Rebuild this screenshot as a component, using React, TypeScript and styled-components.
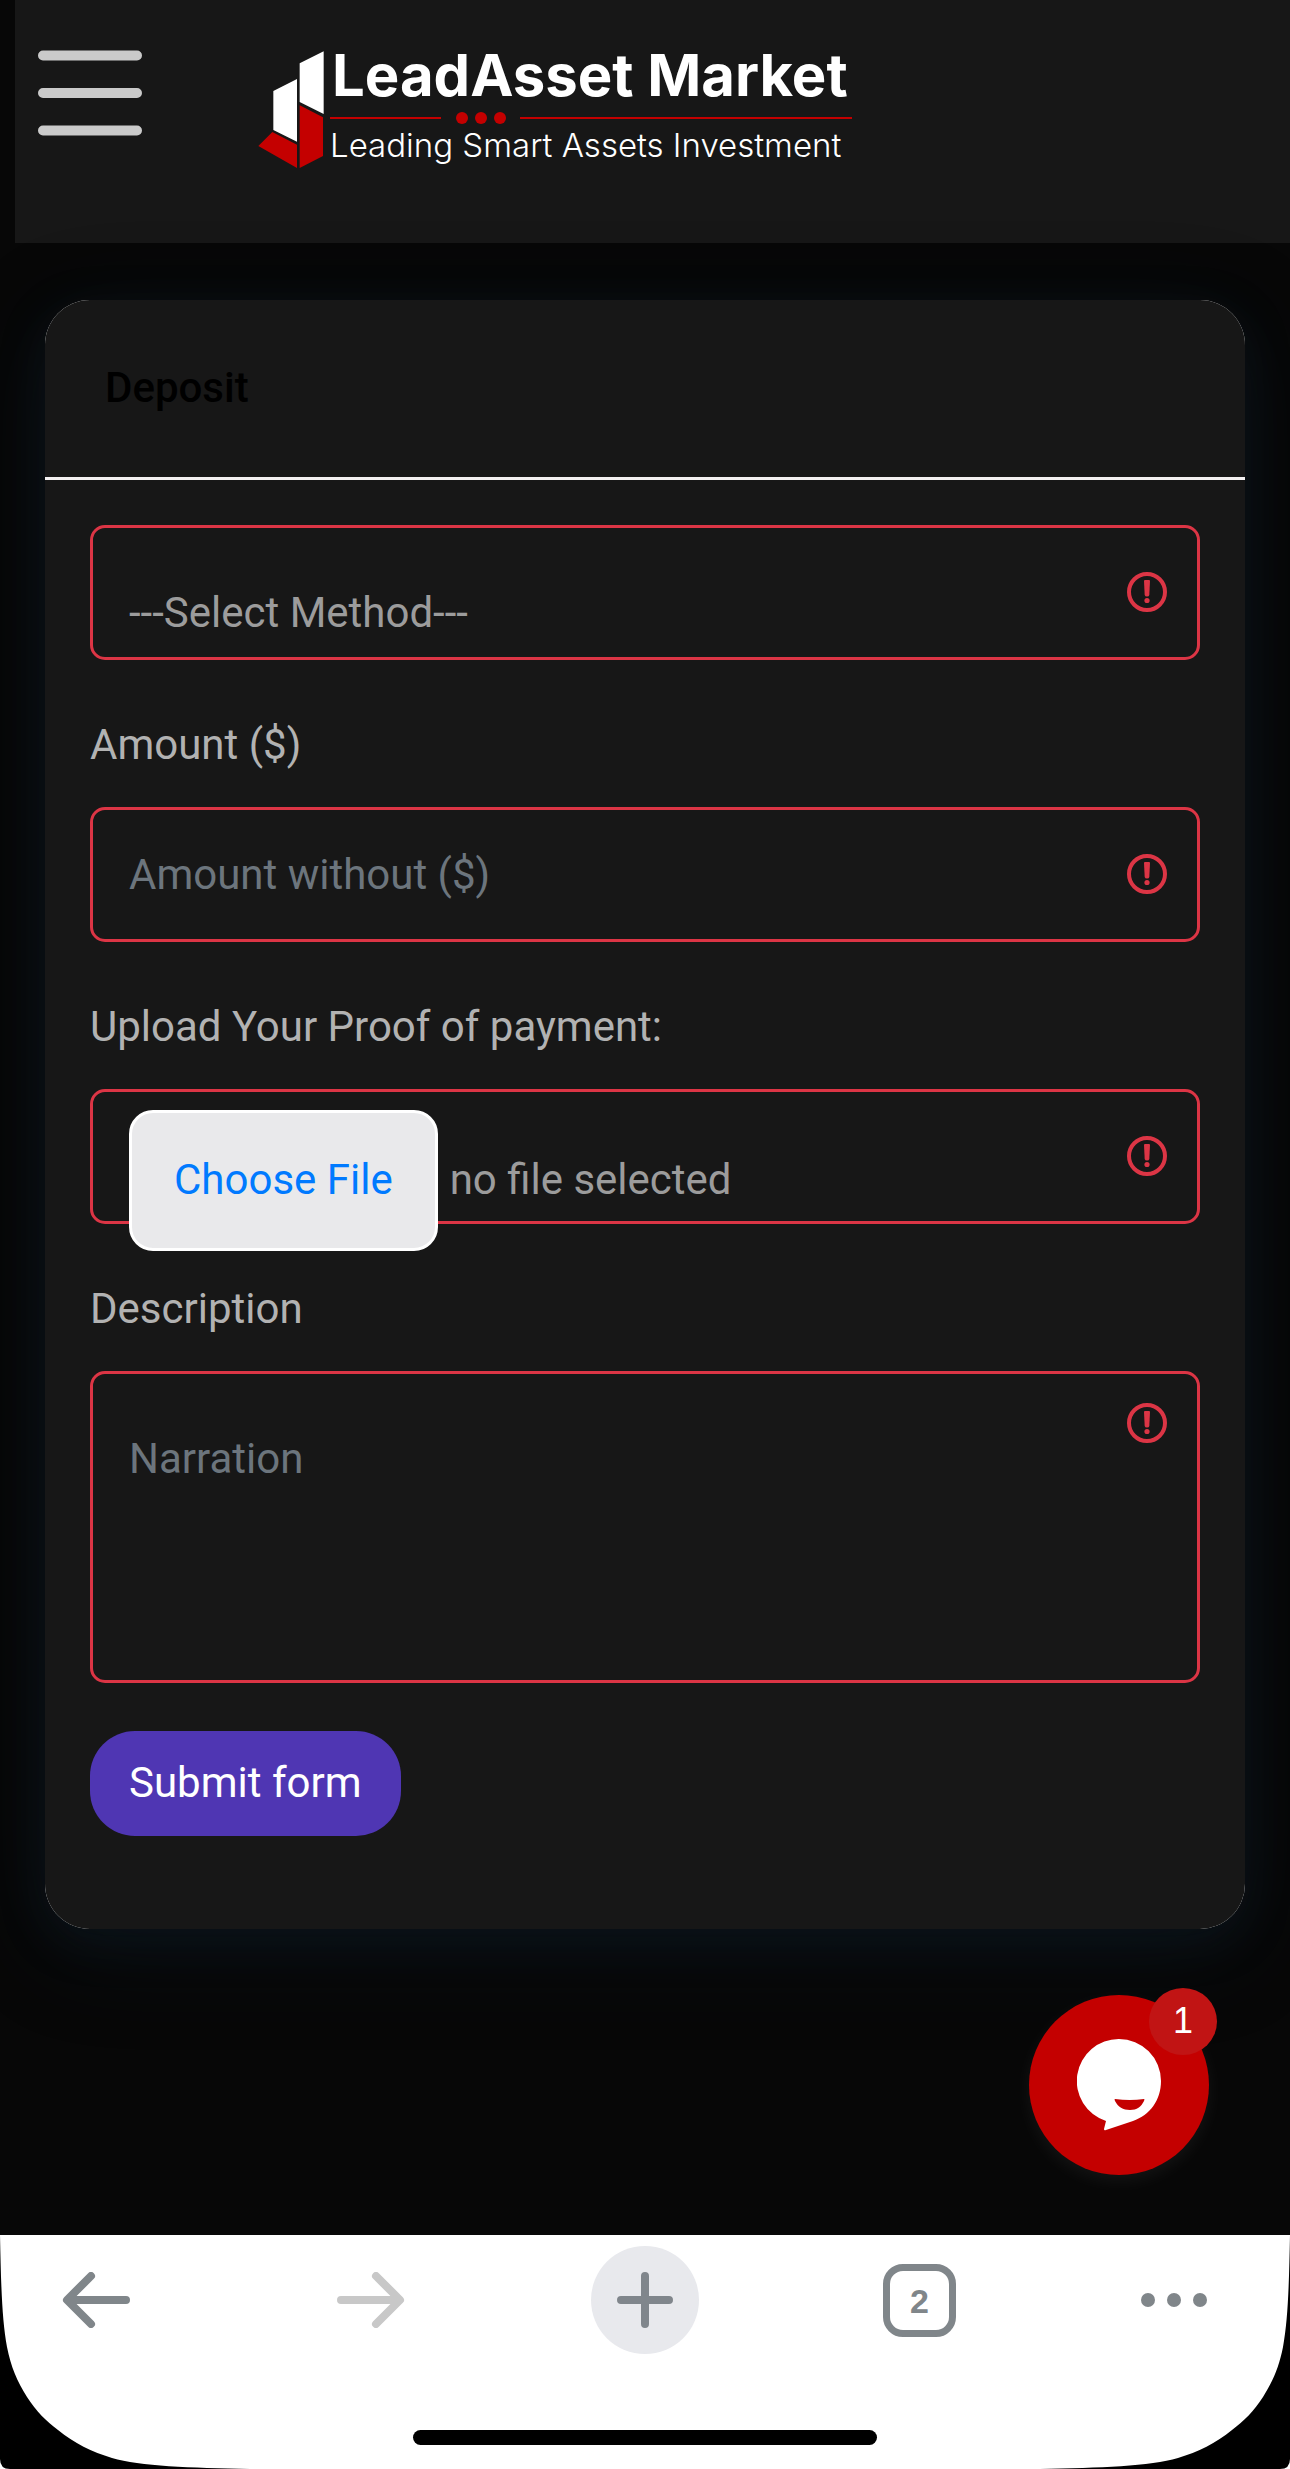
import React from "react";
import styled, { createGlobalStyle, css } from "styled-components";

const GlobalStyle = createGlobalStyle`
  *, *::before, *::after { box-sizing: border-box; }
  html, body { margin: 0; background: #070707; }
  body { font-family: Roboto, "Liberation Sans", sans-serif; font-size: 42px; line-height: 63px; }
  button, input, select, textarea { font: inherit; margin: 0; }
`;

const Page = styled.div`
  display: flex;
  flex-direction: column;
  min-height: 100vh;
  background: #070707;
`;

const Header = styled.header`
  display: flex;
  align-items: flex-start;
  height: 243px;
  margin-left: 15px;
  padding: 50px 24px 0 23px;
  background: #171717;
`;

const MenuButton = styled.button`
  display: flex;
  padding: 0;
  border: 0;
  background: none;
  cursor: pointer;
`;

const Brand = styled.a`
  display: flex;
  margin-left: 116px;
  gap: 6px;
  color: #fff;
  text-decoration: none;
`;

const BrandText = styled.span`
  display: flex;
  flex-direction: column;
  width: 522px;
`;

const BrandName = styled.span`
  padding-left: 2px;
  font-family: Inter, sans-serif;
  font-size: 58px;
  font-weight: 700;
  line-height: 50px;
  white-space: nowrap;
`;

const BrandRule = styled.span`
  display: flex;
  align-items: center;
  height: 12px;
  margin-top: 12px;
`;

const Line = styled.span<{ $grow?: boolean }>`
  height: 2px;
  background: #c40000;
  ${(p) => (p.$grow ? css`flex: 1;` : css`width: 111px;`)}
`;

const Dots = styled.span`
  display: flex;
  gap: 7px;
  padding: 0 14px 0 15px;
`;

const Dot = styled.span`
  width: 12px;
  height: 12px;
  border-radius: 50%;
  background: #c40000;
`;

const Tagline = styled.span`
  font-family: Inter, sans-serif;
  font-size: 33px;
  font-weight: 300;
  line-height: 42px;
  white-space: nowrap;
`;

const Main = styled.main`
  position: relative;
  flex: 1;
  padding: 57px 45px 306px;
`;

const Card = styled.section`
  overflow: hidden;
  border-radius: 45px;
  background: #fff;
  box-shadow: 0 21px 96px rgba(18, 38, 54, 0.3), 0 12px 45px rgba(18, 38, 54, 0.25);
`;

const CardHeader = styled.header`
  display: flex;
  align-items: center;
  height: 180px;
  padding: 0 60px 2px;
  border-bottom: 3px solid #f3f0f1;
  background: #171717;
`;

const CardTitle = styled.h1`
  margin: 0;
  color: #000;
  font-size: 42px;
  font-weight: 500;
`;

const Form = styled.form`
  display: flex;
  flex-direction: column;
  gap: 53px;
  padding: 45px 45px 93px;
  background: #171717;
`;

const Field = styled.div`
  display: flex;
  flex-direction: column;
  gap: 31px;
`;

const Label = styled.label`
  color: #b2b2b2;
`;

const ControlWrap = styled.div`
  position: relative;
  display: flex;
`;

const controlBox = css`
  width: 100%;
  height: 135px;
  padding: 0 100px 0 36px;
  border: 3px solid #dc3545;
  border-radius: 15px;
  outline: none;
  background: transparent;
  color: #9c9c9c;
  &::placeholder { color: #6c757d; opacity: 1; }
`;

const Select = styled.select`
  ${controlBox}
  padding-top: 40px;
  appearance: none;
`;

const Input = styled.input`
  ${controlBox}
`;

const TextArea = styled.textarea`
  ${controlBox}
  display: block;
  height: 312px;
  padding-top: 53px;
  resize: none;
`;

const FileBox = styled.label`
  ${controlBox}
  display: flex;
  align-items: baseline;
  gap: 12px;
  padding-top: 18px;
  line-height: 133px;
  cursor: pointer;
`;

const FileInput = styled.input`
  position: absolute;
  width: 1px;
  height: 1px;
  opacity: 0;
`;

const FileButton = styled.span`
  flex: none;
  padding: 0 42px 2px;
  border: 3px solid #fff;
  border-radius: 24px;
  background: #e9e9eb;
  color: #007aff;
`;

const AlertIcon = styled.svg<{ $top?: boolean }>`
  position: absolute;
  right: 33px;
  top: ${(p) => (p.$top ? "32px" : "47px")};
  width: 40px;
  height: 40px;
  pointer-events: none;
`;

const Submit = styled.button`
  align-self: flex-start;
  height: 105px;
  margin-top: -5px;
  padding: 0 39px 2px;
  border: 0;
  border-radius: 45px;
  background: #4f36b3;
  color: #fff;
  cursor: pointer;
`;

const ChatButton = styled.button`
  position: absolute;
  right: 81px;
  bottom: 60px;
  display: flex;
  align-items: center;
  justify-content: center;
  width: 180px;
  height: 180px;
  padding: 0;
  border: 0;
  border-radius: 50%;
  background: #c40000;
  box-shadow: 0 6px 18px rgba(255, 255, 255, 0.06);
  cursor: pointer;
`;

const Badge = styled.span`
  position: absolute;
  top: -7px;
  right: -8px;
  width: 68px;
  height: 67px;
  border-radius: 50%;
  background: #c11414;
  color: #fff;
  font-family: "Liberation Sans", sans-serif;
  font-size: 36px;
  line-height: 66px;
  text-align: center;
`;

const BottomBar = styled.footer`
  position: relative;
  height: 234px;
  padding: 11px 0 24px;
  background: #fff;
  display: flex;
  flex-direction: column;
  justify-content: space-between;
  align-items: center;
`;

const Corner = styled.svg<{ $right?: boolean }>`
  position: absolute;
  bottom: 0;
  width: 250px;
  height: 234px;
  ${(p) => (p.$right ? css`right: 0; transform: scaleX(-1);` : css`left: 0;`)}
`;

const Nav = styled.nav`
  position: relative;
  z-index: 1;
  display: flex;
  align-items: center;
  justify-content: space-between;
  width: 100%;
  padding: 0 82px 0 42px;
`;

const NavButton = styled.button<{ $filled?: boolean; $narrow?: boolean }>`
  display: flex;
  align-items: center;
  justify-content: center;
  width: ${(p) => (p.$narrow ? "68px" : "108px")};
  height: 108px;
  padding: 0;
  border: 0;
  border-radius: 50%;
  background: ${(p) => (p.$filled ? "#e8e9ed" : "transparent")};
  cursor: pointer;
`;

const TabCount = styled.span`
  width: 73px;
  height: 73px;
  border: 7px solid #80868a;
  border-radius: 20px;
  color: #80868a;
  font-family: "Liberation Sans", sans-serif;
  font-size: 34px;
  font-weight: 700;
  line-height: 60px;
  text-align: center;
`;

const HomeIndicator = styled.div`
  width: 36%;
  height: 15px;
  border-radius: 8px;
  background: #000;
`;

const Alert = ({ top }: { top?: boolean }) => (
  <AlertIcon $top={top} viewBox="0 0 40 40" aria-hidden="true">
    <circle cx="20" cy="20" r="18" fill="none" stroke="#dc3545" strokeWidth="4" />
    <path d="M18 8h4q1 0 1 1l-.7 14q-.2 1.500-2.300 1.500T17.700 23L17 9q0-1 1-1z" fill="#dc3545" />
    <circle cx="20" cy="28.500" r="2.600" fill="#dc3545" />
  </AlertIcon>
);

const CornerShape = ({ right }: { right?: boolean }) => (
  <Corner $right={right} viewBox="0 0 250 234" aria-hidden="true">
    <path d="M0 0C1 50 2 85 7 112C11 132 17 146 27 162C36 176 46 186 58 195C74 208 92 217 112 223C140 231 190 233 250 234H10Q0 234 0 224Z" fill="#000" />
  </Corner>
);

const Arrow = ({ color, flip }: { color: string; flip?: boolean }) => (
  <svg width="68" height="56" viewBox="0 0 68 56" fill="none" stroke={color} strokeWidth="8" strokeLinecap="round" strokeLinejoin="round" aria-hidden="true">
    <path d={flip ? "M4 28H62M39 4L63 28L39 52" : "M64 28H6M29 4L5 28L29 52"} />
  </svg>
);

export default function App() {
  return (
    <Page>
      <GlobalStyle />
      <Header>
        <MenuButton type="button" aria-label="Open menu">
          <svg width="104" height="86" viewBox="0 0 104 86" stroke="#cacaca" strokeWidth="10" strokeLinecap="round" aria-hidden="true">
            <path d="M5 5.500H99M5 43H99M5 80.500H99" />
          </svg>
        </MenuButton>
        <Brand href="#">
          <svg width="66" height="119" viewBox="54 60 198 357" aria-hidden="true">
            <path d="M179 100L251 64V252L179 216ZM100 183L171 147V335L100 300Z" fill="#fff" />
            <path d="M179 226L249 262V378L179 414ZM97 306L171 344V414L55 348Z" fill="#c40000" />
          </svg>
          <BrandText>
            <BrandName>LeadAsset Market</BrandName>
            <BrandRule>
              <Line />
              <Dots><Dot /><Dot /><Dot /></Dots>
              <Line $grow />
            </BrandRule>
            <Tagline>Leading Smart Assets Investment</Tagline>
          </BrandText>
        </Brand>
      </Header>

      <Main>
        <Card>
          <CardHeader>
            <CardTitle>Deposit</CardTitle>
          </CardHeader>
          <Form onSubmit={(e) => e.preventDefault()}>
            <ControlWrap>
              <Select aria-label="Method" defaultValue="">
                <option value="">---Select Method---</option>
              </Select>
              <Alert />
            </ControlWrap>
            <Field>
              <Label htmlFor="amount">Amount ($)</Label>
              <ControlWrap>
                <Input id="amount" type="text" inputMode="decimal" placeholder="Amount without ($)" />
                <Alert />
              </ControlWrap>
            </Field>
            <Field>
              <Label htmlFor="proof">Upload Your Proof of payment:</Label>
              <ControlWrap>
                <FileBox>
                  <FileInput id="proof" type="file" />
                  <FileButton>Choose File</FileButton>
                  <span>no file selected</span>
                </FileBox>
                <Alert />
              </ControlWrap>
            </Field>
            <Field>
              <Label htmlFor="description">Description</Label>
              <ControlWrap>
                <TextArea id="description" placeholder="Narration" />
                <Alert top />
              </ControlWrap>
            </Field>
            <Submit type="submit">Submit form</Submit>
          </Form>
        </Card>
        <ChatButton type="button" aria-label="Open chat, 1 unread message">
          <svg width="84" height="92" viewBox="0 0 84 92" aria-hidden="true">
            <path d="M42 0A42 42 0 0 1 84 42C84 61 73 76 56 82L29 91Q27 92 27 90L29 82A42 42 0 0 1 42 0Z" fill="#fff" />
            <path d="M38 60Q53 62 67 60Q68 60 67 62C64 68 60 71 53 71S41 68 38 62Q37 60 38 60Z" fill="#c40000" />
          </svg>
          <Badge>1</Badge>
        </ChatButton>
      </Main>

      <BottomBar>
        <CornerShape />
        <CornerShape right />
        <Nav aria-label="Browser">
          <NavButton type="button" aria-label="Back"><Arrow color="#80868a" /></NavButton>
          <NavButton type="button" aria-label="Forward"><Arrow color="#c8c8c8" flip /></NavButton>
          <NavButton type="button" aria-label="New tab" $filled>
            <svg width="56" height="56" viewBox="0 0 56 56" stroke="#80868c" strokeWidth="8" strokeLinecap="round" aria-hidden="true">
              <path d="M4 28H52M28 4V52" />
            </svg>
          </NavButton>
          <NavButton type="button" aria-label="Tabs"><TabCount>2</TabCount></NavButton>
          <NavButton type="button" aria-label="More" $narrow>
            <svg width="68" height="16" viewBox="0 0 68 16" fill="#80868a" aria-hidden="true">
              <circle cx="8" cy="8" r="7" /><circle cx="34" cy="8" r="7" /><circle cx="60" cy="8" r="7" />
            </svg>
          </NavButton>
        </Nav>
        <HomeIndicator />
      </BottomBar>
    </Page>
  );
}
